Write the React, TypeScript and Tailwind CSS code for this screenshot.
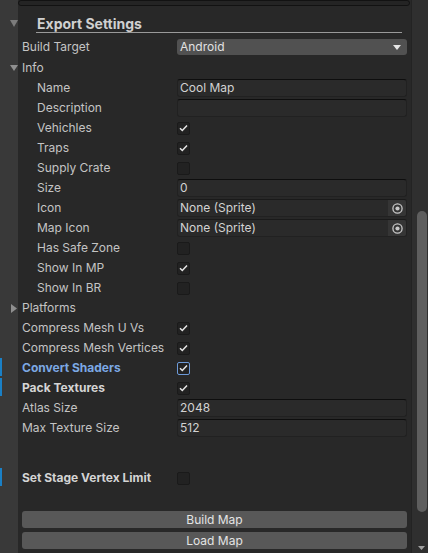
import React from "react";

type Fold = "down" | "right";

// foldout arrow used in the inspector gutter
const FoldArrow = ({ dir, color = "#8f8f8f" }: { dir: Fold; color?: string }) =>
  dir === "down" ? (
    <svg width="8" height="6" viewBox="0 0 8 6" className="shrink-0">
      <polygon points="0,0 8,0 4,6" fill={color} />
    </svg>
  ) : (
    <svg width="6" height="9" viewBox="0 0 6 9" className="shrink-0">
      <polygon points="0,0 6,4.5 0,9" fill={color} />
    </svg>
  );

const CheckBox = ({ on, focus }: { on: boolean; focus?: boolean }) => (
  <div
    className={`flex h-[13px] w-[13px] items-center justify-center rounded-[2px] border bg-[#222222] ${
      focus ? "border-[#6d9ad8]" : "border-[#1a1a1a]"
    }`}
  >
    {on && (
      <svg width="9" height="8" viewBox="0 0 9 8">
        <path d="M1 4.2l2.3 2.3L8 1.5" stroke="#e6e6e6" strokeWidth="1.5" fill="none" />
      </svg>
    )}
  </div>
);

const TextField = ({ value = "" }: { value?: string }) => (
  <div className="flex h-[18px] w-full items-center rounded-[3px] border border-[#212121] border-t-[#0e0e0e] bg-[#2a2a2a] pl-[2px] text-[#d2d2d2]">
    {value}
  </div>
);

const ObjectField = ({ value }: { value: string }) => (
  <div className="flex h-[18px] w-full items-center rounded-[3px] border border-[#212121] border-t-[#1a1a1a] bg-[#2a2a2a] text-[#d2d2d2]">
    <span className="flex-1 pl-[2px]">{value}</span>
    <div className="flex h-full w-[18px] items-center justify-center rounded-r-[2px] bg-[#353535]">
      <svg width="11" height="11" viewBox="0 0 11 11">
        <circle cx="5.5" cy="5.5" r="4.6" stroke="#c8c8c8" strokeWidth="1.3" fill="none" />
        <circle cx="5.5" cy="5.5" r="2.1" fill="#c8c8c8" />
      </svg>
    </div>
  </div>
);

const Dropdown = ({ value }: { value: string }) => (
  <div className="flex h-[16px] w-full items-center justify-between rounded-[3px] bg-[#515151] pl-[3px] pr-[6px] text-[#e2e2e2]">
    <span>{value}</span>
    <svg width="8" height="5" viewBox="0 0 8 5">
      <polygon points="0,0 8,0 4,5" fill="#e6e6e6" />
    </svg>
  </div>
);

interface RowProps {
  label: string;
  indent?: boolean;
  bold?: boolean;
  blue?: boolean;
  marked?: boolean;
  fold?: Fold;
  children?: React.ReactNode;
}

const Row = ({ label, indent, bold, blue, marked, fold, children }: RowProps) => (
  <div className="flex h-5 items-center">
    <div className="flex h-full w-[18px] items-center">
      {marked ? <div className="h-[18px] w-[2px] self-start bg-[#1a80c6]" /> : <div className="w-[2px]" />}
      {fold && <div className={fold === "down" ? "ml-[8px]" : "ml-[9px]"}><FoldArrow dir={fold} /></div>}
    </div>
    <div
      className={`w-[159px] truncate ${indent ? "pl-[19px]" : "pl-[4px]"} ${bold ? "font-bold" : ""} ${
        blue ? "text-[#7ca8e4]" : bold ? "text-[#d4d4d4]" : "text-[#c4c4c4]"
      }`}
    >
      {label}
    </div>
    <div className="flex w-[230px] items-center">{children}</div>
  </div>
);

const infoRows: { label: string; el: React.ReactNode }[] = [
  { label: "Name", el: <TextField value="Cool Map" /> },
  { label: "Description", el: <TextField /> },
  { label: "Vehichles", el: <CheckBox on /> },
  { label: "Traps", el: <CheckBox on /> },
  { label: "Supply Crate", el: <CheckBox on={false} /> },
  { label: "Size", el: <TextField value="0" /> },
  { label: "Icon", el: <ObjectField value="None (Sprite)" /> },
  { label: "Map Icon", el: <ObjectField value="None (Sprite)" /> },
  { label: "Has Safe Zone", el: <CheckBox on={false} /> },
  { label: "Show In MP", el: <CheckBox on /> },
  { label: "Show In BR", el: <CheckBox on={false} /> },
];

export default function App() {
  return (
    <div className="flex h-[553px] w-[428px] overflow-hidden font-[Inter,'Liberation_Sans',sans-serif] text-[12px] leading-4">
      <div className="flex w-[411px] flex-col bg-[linear-gradient(to_right,#393939_18px,#282828_18px)]">
        {/* top strip */}
        <div className="ml-[18px] mr-[1px] h-[6px] rounded-[3px] border border-[#121212] bg-[#242424]" />

        {/* header */}
        <div className="flex h-[31px]">
          <div className="w-[18px] pl-[10px] pt-[14px]">
            <svg width="8" height="7" viewBox="0 0 8 7">
              <polygon points="0,0 8,0 4,7" fill="#7c7c7c" />
            </svg>
          </div>
          <div className="ml-[18px] mr-[9px] h-[27px] flex-1 border-b border-[#9a9a9a] pl-[1px] pt-[9px] text-[14px] font-bold leading-[17px] text-[#d0d0d0]">
            Export Settings
          </div>
        </div>

        <Row label="Build Target">
          <Dropdown value="Android" />
        </Row>
        <div className="h-px" />
        <Row label="Info" fold="down" />
        {infoRows.map((r) => (
          <Row key={r.label} label={r.label} indent>
            {r.el}
          </Row>
        ))}
        <Row label="Platforms" fold="right" />
        <Row label="Compress Mesh U Vs">
          <CheckBox on />
        </Row>
        <Row label="Compress Mesh Vertices">
          <CheckBox on />
        </Row>
        <Row label="Convert Shaders" bold blue marked>
          <CheckBox on focus />
        </Row>
        <Row label="Pack Textures" bold marked>
          <CheckBox on />
        </Row>
        <Row label="Atlas Size">
          <TextField value="2048" />
        </Row>
        <Row label="Max Texture Size">
          <TextField value="512" />
        </Row>

        <div className="h-[30px]" />
        <Row label="Set Stage Vertex Limit" bold marked>
          <CheckBox on={false} />
        </Row>

        <div className="mt-[23px] flex flex-col gap-[4px] pl-[22px] pr-[4px]">
          <button className="h-[17px] rounded-[3px] bg-[#585858] text-center text-[#e4e4e4]">Build Map</button>
          <button className="h-[17px] rounded-[3px] bg-[#585858] text-center text-[#e4e4e4]">Load Map</button>
        </div>
      </div>

      {/* vertical scrollbar */}
      <div className="flex w-[17px] flex-col border-l border-[#232323] bg-[#2f2f2f]">
        <div className="ml-[5px] mt-[211px] h-[301px] w-[10px] rounded-[5px] bg-[#5e5e5e]" />
        <div className="ml-[6px] mt-[34px]">
          <svg width="7" height="4" viewBox="0 0 7 4">
            <polygon points="0,0 7,0 3.5,4" fill="#a0a0a0" />
          </svg>
        </div>
      </div>
    </div>
  );
}
